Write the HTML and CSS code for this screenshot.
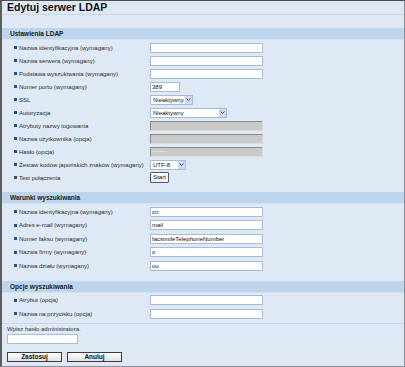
FILE: index.html
```html
<!DOCTYPE html>
<html lang="pl">
<head>
<meta charset="utf-8">
<title>Edytuj serwer LDAP</title>
<link rel="stylesheet" href="styles.css">
</head>
<body>
<div class="frame">
  <h1 class="title">Edytuj serwer LDAP</h1>

  <div class="section first">
    <div class="section-head">Ustawienia LDAP</div>
    <div class="rows">
      <div class="row"><span class="bullet"></span><span class="label">Nazwa identyfikacyjna (wymagany)</span><span class="colon">:</span><input class="text" type="text" value=""></div>
      <div class="row"><span class="bullet"></span><span class="label">Nazwa serwera (wymagany)</span><span class="colon">:</span><input class="text" type="text" value=""></div>
      <div class="row"><span class="bullet"></span><span class="label">Podstawa wyszukiwania (wymagany)</span><span class="colon">:</span><input class="text" type="text" value=""></div>
      <div class="row"><span class="bullet"></span><span class="label">Numer portu (wymagany)</span><span class="colon">:</span><input class="text short" type="text" value="389"></div>
      <div class="row"><span class="bullet"></span><span class="label">SSL</span><span class="colon">:</span>
        <div class="select w-ssl"><span class="val">Nieaktywny</span><span class="arrow"><svg width="5" height="3" viewBox="0 0 5 3"><polyline points="0.5,0.5 2.5,2.5 4.5,0.5" fill="none" stroke="#2a4f9a" stroke-width="1"/></svg></span></div>
      </div>
      <div class="row"><span class="bullet"></span><span class="label">Autoryzacja</span><span class="colon">:</span>
        <div class="select w-auth"><span class="val">Nieaktywny</span><span class="arrow"><svg width="5" height="3" viewBox="0 0 5 3"><polyline points="0.5,0.5 2.5,2.5 4.5,0.5" fill="none" stroke="#2a4f9a" stroke-width="1"/></svg></span></div>
      </div>
      <div class="row"><span class="bullet"></span><span class="label">Atrybuty nazwy logowania</span><span class="colon">:</span><input class="text disabled" type="text" value="" disabled></div>
      <div class="row"><span class="bullet"></span><span class="label">Nazwa użytkownika (opcja)</span><span class="colon">:</span><input class="text disabled" type="text" value="" disabled></div>
      <div class="row"><span class="bullet"></span><span class="label">Hasło (opcja)</span><span class="colon">:</span><input class="text disabled pass" type="text" value="••••••••" disabled></div>
      <div class="row"><span class="bullet"></span><span class="label">Zestaw kodów japońskich znaków (wymagany)</span><span class="colon">:</span>
        <div class="select w-utf"><span class="val">UTF-8</span><span class="arrow"><svg width="5" height="3" viewBox="0 0 5 3"><polyline points="0.5,0.5 2.5,2.5 4.5,0.5" fill="none" stroke="#2a4f9a" stroke-width="1"/></svg></span></div>
      </div>
      <div class="row"><span class="bullet"></span><span class="label">Test połączenia</span><span class="colon">:</span><button class="btn-small" type="button">Start</button></div>
    </div>
  </div>

  <div class="section">
    <div class="section-head">Warunki wyszukiwania</div>
    <div class="rows loose">
      <div class="row"><span class="bullet"></span><span class="label">Nazwa identyfikacyjna (wymagany)</span><span class="colon">:</span><input class="text" type="text" value="cn"></div>
      <div class="row"><span class="bullet"></span><span class="label">Adres e-mail (wymagany)</span><span class="colon">:</span><input class="text" type="text" value="mail"></div>
      <div class="row"><span class="bullet"></span><span class="label">Numer faksu (wymagany)</span><span class="colon">:</span><input class="text" type="text" value="facsimileTelephoneNumber"></div>
      <div class="row"><span class="bullet"></span><span class="label">Nazwa firmy (wymagany)</span><span class="colon">:</span><input class="text" type="text" value="o"></div>
      <div class="row"><span class="bullet"></span><span class="label">Nazwa działu (wymagany)</span><span class="colon">:</span><input class="text" type="text" value="ou"></div>
    </div>
  </div>

  <div class="section">
    <div class="section-head">Opcje wyszukiwania</div>
    <div class="rows loose">
      <div class="row"><span class="bullet"></span><span class="label">Atrybut (opcja)</span><span class="colon">:</span><input class="text" type="text" value=""></div>
      <div class="row"><span class="bullet"></span><span class="label">Nazwa na przycisku (opcja)</span><span class="colon">:</span><input class="text" type="text" value=""></div>
    </div>
  </div>

  <div class="admin">
    <div class="admin-label">Wpisz hasło administratora.</div>
    <input class="text admin-input" type="password" value="">
    <div class="actions">
      <button class="btn" type="button">Zastosuj</button>
      <button class="btn" type="button">Anuluj</button>
    </div>
  </div>
</div>
</body>
</html>
```

FILE: styles.css
```css
html, body {
  margin: 0;
  padding: 0;
  background: #dee9f5;
  font-family: "Liberation Sans", Arial, sans-serif;
}

.frame {
  width: 405px;
  height: 367px;
  box-sizing: border-box;
  border-top: 1px solid #4d4d4d;
  border-left: 2px solid #5e5e5e;
  border-right: 1px solid #8a8f96;
  border-bottom: 1px solid #8a8f96;
  background: #dee9f5;
  overflow: hidden;
}

.title {
  margin: 0;
  height: 14px;
  box-sizing: border-box;
  padding: 0 0 0 5px;
  font-size: 10.5px;
  line-height: 13px;
  font-weight: bold;
  color: #111;
  border-bottom: 1px solid #c9d8e8;
}

.section {
  margin-top: 8px;
}

.section.first {
  margin-top: 13px;
}

.section-head {
  height: 12px;
  box-sizing: border-box;
  background: #bdd5ec;
  border-bottom: 1px solid #d2e2f1;
  padding-left: 8px;
  font-size: 6.5px;
  line-height: 12px;
  font-weight: bold;
  color: #1a1a1a;
}

.rows {
  padding-top: 1px;
}

.row {
  display: flex;
  align-items: center;
  height: 13px;
  padding-left: 12px;
}

.rows.loose .row {
  height: 13.5px;
}

.bullet {
  flex: none;
  width: 3px;
  height: 3px;
  margin-right: 2px;
  background: #2b4a8c;
}

.label {
  flex: none;
  width: 129px;
  font-size: 6px;
  line-height: 8px;
  color: #2a2a2a;
  white-space: nowrap;
}

.colon {
  flex: none;
  width: 2px;
  font-size: 6px;
  line-height: 8px;
  color: #a9b4c2;
}

.text {
  flex: none;
  width: 113px;
  height: 10px;
  box-sizing: border-box;
  margin: 0;
  padding: 0 1px;
  border: 1px solid #a6bcd6;
  background: #fff;
  font-family: "Liberation Sans", Arial, sans-serif;
  font-size: 6px;
  color: #111;
  outline: none;
}

.text.short {
  width: 30px;
}

.text.disabled {
  background: #c9c9c9;
  border-color: #8c8c8c #dadada #dadada #8c8c8c;
}

.text.pass {
  color: #eeeeee;
  font-size: 4px;
  letter-spacing: 0.5px;
}

.select {
  flex: none;
  display: flex;
  align-items: center;
  height: 10px;
  box-sizing: border-box;
  border: 1px solid #a6bcd6;
  background: #fff;
  padding-left: 2px;
  font-size: 6px;
  color: #111;
}

.select .val {
  flex: 1;
  line-height: 8px;
  white-space: nowrap;
}

.select .arrow {
  flex: none;
  display: flex;
  align-items: center;
  justify-content: center;
  width: 7px;
  height: 8px;
  background: #cbdbf0;
}

.w-ssl { width: 43px; }
.w-auth { width: 77px; }
.w-utf { width: 36px; }

.btn-small {
  flex: none;
  width: 19px;
  height: 11px;
  margin: 0;
  padding: 0;
  border: 1px solid #4f5a66;
  border-radius: 1px;
  background: linear-gradient(#ffffff, #e8edf3);
  font-family: "Liberation Sans", Arial, sans-serif;
  font-size: 6px;
  line-height: 9px;
  color: #111;
}

.admin {
  margin-top: 2px;
  border-top: 1px solid #c9d8e8;
  padding: 1px 0 0 5px;
}

.admin-label {
  font-size: 6px;
  line-height: 8px;
  color: #333;
}

.admin-input {
  display: block;
  width: 71px;
  margin-top: 1px;
}

.actions {
  display: flex;
  gap: 5px;
  margin-top: 8px;
}

.btn {
  width: 55px;
  height: 10px;
  margin: 0;
  padding: 0;
  border: 1px solid #3c3c3c;
  background: linear-gradient(#ffffff, #e2e2e2);
  font-family: "Liberation Sans", Arial, sans-serif;
  font-size: 6.5px;
  font-weight: bold;
  line-height: 8px;
  color: #111;
}
```
